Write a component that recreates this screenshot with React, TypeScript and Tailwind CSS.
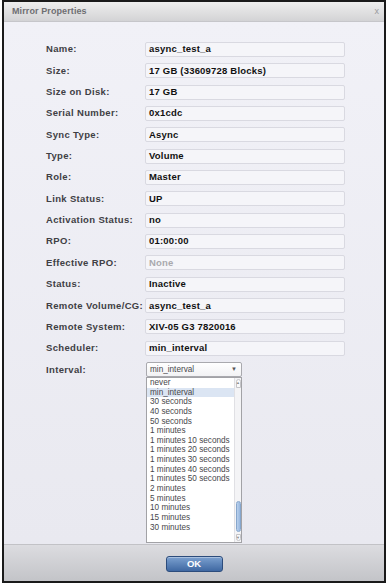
import React from "react";

const rows: { label: string; value: string; muted?: boolean }[] = [
  { label: "Name:", value: "async_test_a" },
  { label: "Size:", value: "17 GB (33609728 Blocks)" },
  { label: "Size on Disk:", value: "17 GB" },
  { label: "Serial Number:", value: "0x1cdc" },
  { label: "Sync Type:", value: "Async" },
  { label: "Type:", value: "Volume" },
  { label: "Role:", value: "Master" },
  { label: "Link Status:", value: "UP" },
  { label: "Activation Status:", value: "no" },
  { label: "RPO:", value: "01:00:00" },
  { label: "Effective RPO:", value: "None", muted: true },
  { label: "Status:", value: "Inactive" },
  { label: "Remote Volume/CG:", value: "async_test_a" },
  { label: "Remote System:", value: "XIV-05 G3 7820016" },
  { label: "Scheduler:", value: "min_interval" },
];

const intervals = [
  "never",
  "min_interval",
  "30 seconds",
  "40 seconds",
  "50 seconds",
  "1 minutes",
  "1 minutes 10 seconds",
  "1 minutes 20 seconds",
  "1 minutes 30 seconds",
  "1 minutes 40 seconds",
  "1 minutes 50 seconds",
  "2 minutes",
  "5 minutes",
  "10 minutes",
  "15 minutes",
  "30 minutes",
];

const font = { fontFamily: '"Liberation Sans", Arial, sans-serif' };

export default function App() {
  return (
    <div className="w-[387px] h-[585px] bg-white" style={font}>
      <div className="ml-[2px] w-[384px] h-[583px] border-2 border-[#1a1a1a] flex flex-col overflow-hidden">
        {/* title bar */}
        <div className="h-[20px] shrink-0 flex items-center justify-between pl-[8px] pr-[5px] bg-gradient-to-b from-[#eeeeee] to-[#d3d3d5] border-b border-[#c6c6ca]">
          <span className="text-[9px] font-bold text-[#6e6e72] tracking-[0.1px]">Mirror Properties</span>
          <span className="text-[9px] text-[#9a9a9e]">x</span>
        </div>

        {/* body */}
        <div className="flex-1 bg-gradient-to-b from-[#f1f1f7] to-[#e9e9f0] pt-[20px] pl-[42px]">
          {rows.map((r) => (
            <div key={r.label} className="flex h-[21.35px]">
              <div className="w-[99px] h-[15px] flex items-center text-[9.5px] font-bold text-[#404044] tracking-[0.35px]">
                {r.label}
              </div>
              <div
                className={
                  "w-[200px] h-[15px] flex items-center px-[3px] rounded-[2px] border border-[#d9d9e1] bg-[#f5f5f9] text-[9.5px] font-bold tracking-[0.2px] " +
                  (r.muted ? "text-[#a9a9ad]" : "text-[#111111]")
                }
              >
                {r.value}
              </div>
            </div>
          ))}
          <div className="flex h-[21px]">
            <div className="w-[99px] h-[15px] flex items-center text-[9.5px] font-bold text-[#404044] tracking-[0.35px]">
              Interval:
            </div>
            <div className="relative ml-[1px] w-[96px] h-[15px]">
              <div className="h-full flex items-center justify-between pl-[3px] pr-[4px] rounded-[2px] border border-[#a9a9ae] bg-gradient-to-b from-white to-[#f2f2f4] text-[8.2px] text-[#48484c]">
                <span>min_interval</span>
                <span className="text-[6px] text-[#555]">▼</span>
              </div>
              {/* open list */}
              <div className="absolute left-0 top-[15px] w-[96px] h-[166px] bg-white border border-[#a2a2a6] flex overflow-hidden z-10">
                <div className="flex-1 overflow-hidden">
                  {intervals.map((it, i) => (
                    <div
                      key={it}
                      className={
                        "h-[9.66px] flex items-center pl-[3px] text-[8.2px] leading-none text-[#47474b] whitespace-nowrap " +
                        (i === 1 ? "bg-[#dbe5f3]" : "")
                      }
                    >
                      {it}
                    </div>
                  ))}
                </div>
                <div className="w-[7px] shrink-0 border-l border-[#e0e0e4] bg-[#f4f4f6] flex flex-col items-center py-[1px]">
                  <div className="h-[9px] w-[5px] rounded-t-[3px] border border-[#c4c4c8] bg-[#fafafa] flex items-start justify-center">
                    <span className="text-[4px] leading-none text-[#888] mt-[1px]">▲</span>
                  </div>
                  <div className="flex-1" />
                  <div className="h-[31px] w-[5px] rounded-[3px] border border-[#86a6cc] bg-gradient-to-r from-[#b9d0ec] to-[#97b7df]" />
                  <div className="h-[7px] w-[5px] mt-[2px] rounded-b-[3px] border border-[#c4c4c8] bg-[#fafafa] flex items-end justify-center">
                    <span className="text-[4px] leading-none text-[#888]">▼</span>
                  </div>
                </div>
              </div>
            </div>
          </div>
        </div>

        {/* footer */}
        <div className="h-[37px] shrink-0 flex items-center justify-center border-t border-[#c2c2c6] bg-gradient-to-b from-[#dcdce0] to-[#c3c4c8]">
          <button className="mt-[1px] w-[57px] h-[16px] rounded-[3px] border border-[#2c4c7c] bg-gradient-to-b from-[#7ca1d0] to-[#3f68a2] text-[9.5px] font-bold text-white shadow-[inset_0_1px_0_rgba(255,255,255,0.35)]">
            OK
          </button>
        </div>
      </div>
    </div>
  );
}
